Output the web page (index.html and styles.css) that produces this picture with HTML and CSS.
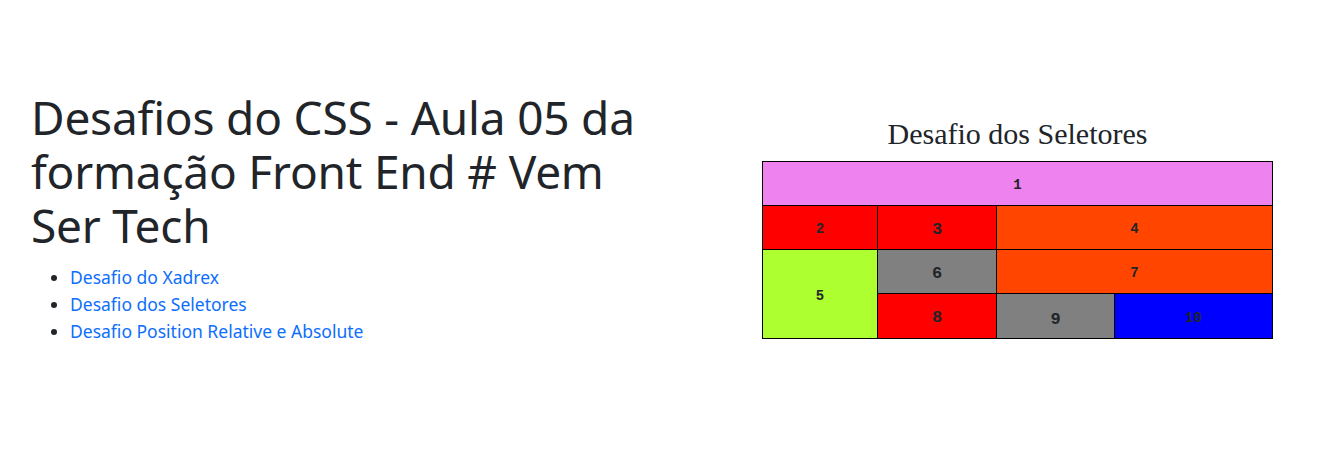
FILE: index.html
```html
<!DOCTYPE html>
<html lang="pt-br">
<head>
<meta charset="utf-8">
<title>Desafios do CSS</title>
<link rel="stylesheet" href="styles.css">
</head>
<body>
<main class="page">
  <section class="intro">
    <h1 class="title">Desafios do CSS - Aula 05 da formação Front End # Vem Ser Tech</h1>
    <ul class="links">
      <li><a href="#">Desafio do Xadrex</a></li>
      <li><a href="#">Desafio dos Seletores</a></li>
      <li><a href="#">Desafio Position Relative e Absolute</a></li>
    </ul>
  </section>
  <section class="challenge">
    <h2 class="challenge-title">Desafio dos Seletores</h2>
    <div class="grid">
      <div class="cell c1 violet small">1</div>
      <div class="cell c2 red small">2</div>
      <div class="cell c3 red">3</div>
      <div class="cell c4 orange small">4</div>
      <div class="cell c5 green small">5</div>
      <div class="cell c6 gray">6</div>
      <div class="cell c7 orange small">7</div>
      <div class="cell c8 red">8</div>
      <div class="cell c9 gray low">9</div>
      <div class="cell c10 blue small">10</div>
    </div>
  </section>
</main>
</body>
</html>
```
FILE: styles.css
```css
html, body {
  margin: 0;
  padding: 0;
  background: #fff;
}

body {
  font-family: "Noto Sans", "Open Sans", sans-serif;
  color: #212529;
}

.page {
  display: flex;
  align-items: flex-start;
  padding: 90px 0 0 31px;
}

.intro {
  width: 640px;
}

.title {
  width: 620px;
  margin: 0 0 12px;
  font-size: 46px;
  font-weight: 400;
  line-height: 54px;
  color: #212529;
  letter-spacing: -0.2px;
}

.links {
  margin: 0;
  padding-left: 39px;
  font-size: 17.5px;
  line-height: 27px;
}

.links a {
  color: #0d6efd;
  text-decoration: none;
}

.challenge {
  margin-left: 91px;
  padding-top: 26px;
  width: 511px;
  display: flex;
  flex-direction: column;
  align-items: center;
}

.challenge-title {
  margin: 0 0 9px;
  font-family: "Liberation Serif", "DejaVu Serif", serif;
  font-size: 30px;
  font-weight: 400;
  line-height: 36px;
  color: #212529;
}

.grid {
  display: grid;
  grid-template-columns: 114px 118px 117px 157px;
  grid-template-rows: 43px 43px 43px 44px;
  gap: 1px;
  padding: 1px;
  background: #000;
}

.cell {
  display: flex;
  align-items: center;
  justify-content: center;
  padding-top: 3px;
  font-family: "Liberation Mono", "DejaVu Sans Mono", monospace;
  font-weight: 700;
  font-size: 17px;
  color: #212529;
}

.cell.small { font-size: 14px; }
.cell.low { padding-top: 6px; }

.c1 { grid-column: 1 / 5; grid-row: 1; }
.c2 { grid-column: 1; grid-row: 2; }
.c3 { grid-column: 2; grid-row: 2; }
.c4 { grid-column: 3 / 5; grid-row: 2; }
.c5 { grid-column: 1; grid-row: 3 / 5; }
.c6 { grid-column: 2; grid-row: 3; }
.c7 { grid-column: 3 / 5; grid-row: 3; }
.c8 { grid-column: 2; grid-row: 4; }
.c9 { grid-column: 3; grid-row: 4; }
.c10 { grid-column: 4; grid-row: 4; }

.violet { background: #ee82ee; }
.red { background: #ff0000; }
.orange { background: #ff4500; }
.green { background: #adff2f; }
.gray { background: #808080; }
.blue { background: #0000ff; }
```
